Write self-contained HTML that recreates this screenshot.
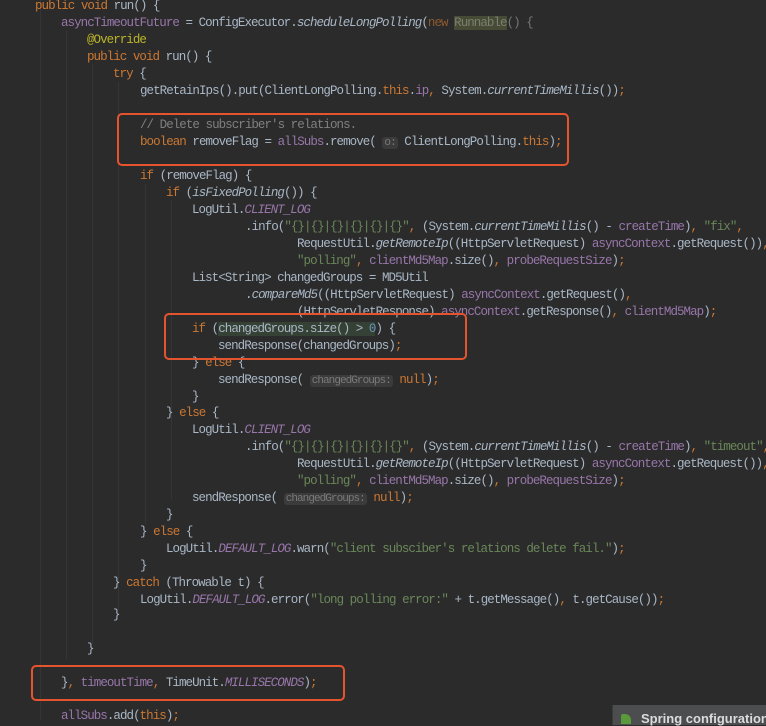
<!DOCTYPE html>
<html><head><meta charset="utf-8"><style>
body{margin:0;width:766px;height:720px;background:#2b2b2b;overflow:hidden;position:relative}
.l{position:absolute;white-space:pre;font-family:"Liberation Mono","DejaVu Sans Mono",monospace;font-size:12.5px;letter-spacing:-0.95px;line-height:17px;color:#a9b7c6}
.k{color:#cc7832}.p{color:#9876aa}.s{color:#6a8759}.c{color:#808080}.a{color:#bbb529}.i{font-style:italic}.n{color:#6897bb}
.h{background:#3b3b3b;color:#7a7a7a;border-radius:3px;font-size:11px;padding:0 2px}
.box{position:absolute;border:2px solid #e4542e;border-radius:5px}
.g{position:absolute;width:1px;background:#353535}
</style></head><body>
<div class="g" style="left:40px;top:0;height:720px"></div>
<div class="g" style="left:66px;top:30px;height:630px"></div>
<div class="g" style="left:92px;top:64px;height:580px"></div>
<div class="g" style="left:118px;top:82px;height:528px"></div>
<div class="g" style="left:145px;top:184px;height:340px"></div>
<div class="g" style="left:171px;top:200px;height:300px"></div>

<div class="l" style="left:35px;top:-2px"><span class="k">public void </span>run() {</div>
<div class="l" style="left:61px;top:15px"><span class="p">asyncTimeoutFuture</span> = ConfigExecutor.<span class="i">scheduleLongPolling</span>(<span class="k" style="opacity:.6">new </span><span style="background:#474a35;color:#7a8070">Runnable</span><span style="color:#777">() {</span></div>
<div class="l" style="left:87px;top:32px"><span class="a">@Override</span></div>
<div class="l" style="left:87px;top:49px"><span class="k">public void </span>run() {</div>
<div class="l" style="left:113px;top:66px"><span class="k">try </span>{</div>
<div class="l" style="left:140px;top:83px">getRetainIps().put(ClientLongPolling.<span class="k">this</span>.<span class="p">ip</span><span class="k">, </span>System.<span class="i">currentTimeMillis</span>())<span class="k">;</span></div>
<div class="l" style="left:140px;top:117px"><span class="c">// Delete subscriber's relations.</span></div>
<div class="l" style="left:140px;top:134px"><span class="k">boolean </span>removeFlag = <span class="p">allSubs</span>.remove( <span class="h">o:</span> ClientLongPolling.<span class="k">this</span>)<span class="k">;</span></div>
<div class="l" style="left:140px;top:168px"><span class="k">if </span>(removeFlag) {</div>
<div class="l" style="left:166px;top:185px"><span class="k">if </span>(<span class="i">isFixedPolling</span>()) {</div>
<div class="l" style="left:192px;top:202px">LogUtil.<span class="p i">CLIENT_LOG</span></div>
<div class="l" style="left:245px;top:219px">.info(<span class="s">"{}|{}|{}|{}|{}|{}"</span><span class="k">, </span>(System.<span class="i">currentTimeMillis</span>() - <span class="p">createTime</span>)<span class="k">, </span><span class="s">"fix"</span><span class="k">,</span></div>
<div class="l" style="left:297px;top:236px">RequestUtil.<span class="i">getRemoteIp</span>((HttpServletRequest) <span class="p">asyncContext</span>.getRequest())<span class="k">,</span></div>
<div class="l" style="left:297px;top:253px"><span class="s">"polling"</span><span class="k">, </span><span class="p">clientMd5Map</span>.size()<span class="k">, </span><span class="p">probeRequestSize</span>)<span class="k">;</span></div>
<div class="l" style="left:192px;top:270px">List&lt;String&gt; changedGroups = MD5Util</div>
<div class="l" style="left:245px;top:287px">.<span class="i">compareMd5</span>((HttpServletRequest) <span class="p">asyncContext</span>.getRequest()<span class="k">,</span></div>
<div class="l" style="left:297px;top:304px">(HttpServletResponse) <span class="p">asyncContext</span>.getResponse()<span class="k">, </span><span class="p">clientMd5Map</span>)<span class="k">;</span></div>
<div class="l" style="left:192px;top:321px"><span class="k">if </span>(<span style="background:#344134">changedGroups.size() &gt; <span class="n">0</span></span>) {</div>
<div class="l" style="left:218px;top:338px">sendResponse(changedGroups)<span class="k">;</span></div>
<div class="l" style="left:192px;top:355px">} <span class="k">else </span>{</div>
<div class="l" style="left:218px;top:372px">sendResponse( <span class="h">changedGroups:</span> <span class="k">null</span>)<span class="k">;</span></div>
<div class="l" style="left:192px;top:389px">}</div>
<div class="l" style="left:166px;top:405px">} <span class="k">else </span>{</div>
<div class="l" style="left:192px;top:422px">LogUtil.<span class="p i">CLIENT_LOG</span></div>
<div class="l" style="left:245px;top:439px">.info(<span class="s">"{}|{}|{}|{}|{}|{}"</span><span class="k">, </span>(System.<span class="i">currentTimeMillis</span>() - <span class="p">createTime</span>)<span class="k">, </span><span class="s">"timeout"</span><span class="k">,</span></div>
<div class="l" style="left:297px;top:456px">RequestUtil.<span class="i">getRemoteIp</span>((HttpServletRequest) <span class="p">asyncContext</span>.getRequest())<span class="k">,</span></div>
<div class="l" style="left:297px;top:473px"><span class="s">"polling"</span><span class="k">, </span><span class="p">clientMd5Map</span>.size()<span class="k">, </span><span class="p">probeRequestSize</span>)<span class="k">;</span></div>
<div class="l" style="left:192px;top:490px">sendResponse( <span class="h">changedGroups:</span> <span class="k">null</span>)<span class="k">;</span></div>
<div class="l" style="left:166px;top:507px">}</div>
<div class="l" style="left:140px;top:524px">} <span class="k">else </span>{</div>
<div class="l" style="left:166px;top:541px">LogUtil.<span class="p i">DEFAULT_LOG</span>.warn(<span class="s">"client subsciber's relations delete fail."</span>)<span class="k">;</span></div>
<div class="l" style="left:140px;top:558px">}</div>
<div class="l" style="left:113px;top:575px">} <span class="k">catch </span>(Throwable t) {</div>
<div class="l" style="left:140px;top:592px">LogUtil.<span class="p i">DEFAULT_LOG</span>.error(<span class="s">"long polling error:"</span> + t.getMessage()<span class="k">, </span>t.getCause())<span class="k">;</span></div>
<div class="l" style="left:113px;top:607px">}</div>
<div class="l" style="left:87px;top:641px">}</div>
<div class="l" style="left:61px;top:675px">}<span class="k">, </span><span class="p">timeoutTime</span><span class="k">, </span>TimeUnit.<span class="p i">MILLISECONDS</span>)<span class="k">;</span></div>
<div class="l" style="left:61px;top:708px"><span class="p">allSubs</span>.add(<span class="k">this</span>)<span class="k">;</span></div>

<div class="box" style="left:117px;top:113px;width:448px;height:49px"></div>
<div class="box" style="left:164px;top:313px;width:299px;height:43px"></div>
<div class="box" style="left:31px;top:665px;width:310px;height:32px"></div>

<div style="position:absolute;left:612px;top:705px;width:160px;height:20px;background:#4b4d4f;border-left:1px solid #3a3a3a"></div>
<div style="position:absolute;left:621px;top:714px;width:10px;height:10px;background:#5a9a3a;border-radius:2px 6px 0 0"></div>
<div style="position:absolute;left:641px;top:711px;font:bold 13px 'Liberation Sans',sans-serif;color:#dcdcdc;white-space:pre">Spring configuration</div>
</body></html>
